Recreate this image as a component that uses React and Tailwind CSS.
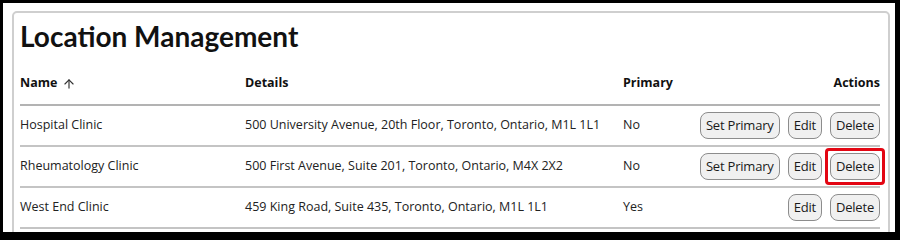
import React from 'react';
import { ArrowUp } from 'lucide-react';

const locations = [
    { name: 'Hospital Clinic', details: '500 University Avenue, 20th Floor, Toronto, Ontario, M1L 1L1', primary: false },
    { name: 'Rheumatology Clinic', details: '500 First Avenue, Suite 201, Toronto, Ontario, M4X 2X2', primary: false, highlight: true },
    { name: 'West End Clinic', details: '459 King Road, Suite 435, Toronto, Ontario, M1L 1L1', primary: true },
];

const Button = ({ children }) => (
    <button className="h-[27px] px-[5px] rounded-[8px] border-[1.5px] border-[#8c8c8c] bg-[#f0f0f0] text-[13px] tracking-[-0.2px] text-[#1a1a1a] leading-none">
        {children}
    </button>
);

const App = () => {
    return (
        <div className="w-[900px] h-[240px] bg-black pl-[3px] pt-[3px] pr-[5px] pb-[8px]" style={{ fontFamily: '"Open Sans", sans-serif' }}>
            <div className="h-full bg-white overflow-hidden pl-[9px] pt-[8px] pr-[5px]">
                <div className="border-2 border-[#cfcfcf] rounded-[5px] pl-[6px] pr-[8px] pt-[6px] pb-4">
                    {/* Title */}
                    <h1 className="text-[28px] leading-[34px] font-bold text-[#111]" style={{ fontFamily: 'Lato, sans-serif' }}>
                        Location Management
                    </h1>

                    {/* Header */}
                    <div className="mt-[10px] h-[43px] flex items-center border-b-2 border-[#b3b3b3] text-[12.5px] font-bold text-[#111]">
                        <div className="w-[225px] flex items-center gap-[5px]">
                            Name <ArrowUp size={14} strokeWidth={2} className="text-[#333]" />
                        </div>
                        <div className="w-[378px]">Details</div>
                        <div className="flex-1">Primary</div>
                        <div>Actions</div>
                    </div>

                    {/* Rows */}
                    {locations.map((loc) => (
                        <div key={loc.name} className="h-[41px] flex items-center border-b-2 border-[#c4c4c4] text-[12.5px] text-[#222]">
                            <div className="w-[225px]">{loc.name}</div>
                            <div className="w-[378px]">{loc.details}</div>
                            <div className="flex-1">{loc.primary ? 'Yes' : 'No'}</div>
                            <div className="flex items-center gap-[8px]">
                                {!loc.primary && <Button>Set Primary</Button>}
                                <Button>Edit</Button>
                                <div className="relative flex">
                                    <Button>Delete</Button>
                                    {loc.highlight && (
                                        <div className="absolute -inset-[5px] border-[3px] border-[#e30613] rounded-[4px]" />
                                    )}
                                </div>
                            </div>
                        </div>
                    ))}
                </div>
            </div>
        </div>
    );
};

export default App;
